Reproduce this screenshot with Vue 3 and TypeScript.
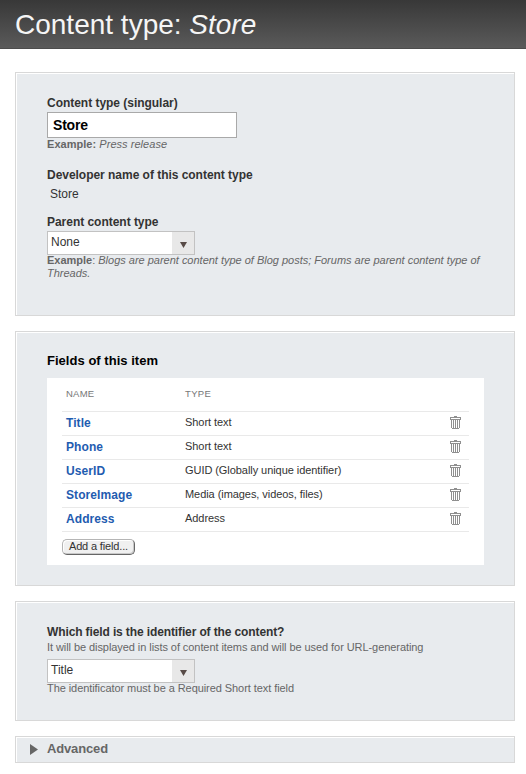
<script setup lang="ts">
import { ref } from 'vue'

interface Field {
  name: string
  type: string
}

const singularName = ref('Store')
const fields: Field[] = [
  { name: 'Title', type: 'Short text' },
  { name: 'Phone', type: 'Short text' },
  { name: 'UserID', type: 'GUID (Globally unique identifier)' },
  { name: 'StoreImage', type: 'Media (images, videos, files)' },
  { name: 'Address', type: 'Address' },
]
</script>

<template>
  <div class="page">
    <header class="header">
      <h1>Content type: <em>Store</em></h1>
    </header>
    <main class="panels">
      <section class="panel general">
        <label class="label" for="singular">Content type (singular)</label>
        <input id="singular" v-model="singularName" class="text-input" type="text" />
        <p class="hint first"><b>Example:</b> <em>Press release</em></p>
        <div class="label developer">Developer name of this content type</div>
        <div class="value">Store</div>
        <div class="label parent">Parent content type</div>
        <div class="select">
          <span class="select-text">None</span>
          <span class="select-button">
            <svg width="7" height="6" viewBox="0 0 7 6"><path d="M0 0H7L3.5 6Z" fill="#584b47" /></svg>
          </span>
        </div>
        <p class="hint wide"><b>Example</b>: <em>Blogs are parent content type of Blog posts; Forums are parent content type of Threads.</em></p>
      </section>

      <section class="panel fields">
        <h2>Fields of this item</h2>
        <div class="table-box">
          <div class="row head"><span class="name">NAME</span><span>TYPE</span></div>
          <div v-for="field in fields" :key="field.name" class="row">
            <a class="name">{{ field.name }}</a>
            <span class="type">{{ field.type }}</span>
            <svg class="trash" width="11" height="13" viewBox="0 0 11 13" shape-rendering="crispEdges">
              <g fill="#8f8f8f">
                <path d="M4 0h3v1H4z" />
                <path fill-rule="evenodd" d="M0 1h11v3H0zM1 2v1h9V2z" />
                <path d="M1 4h1v8H1zM3 4h1v8H3zM5 4h1v8H5zM7 4h1v8H7zM9 4h1v8H9zM2 12h7v1H2z" />
              </g>
            </svg>
          </div>
          <button class="add" type="button">Add a field...</button>
        </div>
      </section>

      <section class="panel identifier">
        <div class="label question">Which field is the identifier of the content?</div>
        <p class="hint intro">It will be displayed in lists of content items and will be used for URL-generating</p>
        <div class="select">
          <span class="select-text">Title</span>
          <span class="select-button">
            <svg width="7" height="6" viewBox="0 0 7 6"><path d="M0 0H7L3.5 6Z" fill="#584b47" /></svg>
          </span>
        </div>
        <p class="hint note">The identificator must be a Required Short text field</p>
      </section>

      <section class="panel advanced">
        <svg width="8" height="11" viewBox="0 0 8 11"><path d="M0 0L8 5.5L0 11Z" fill="#666" /></svg>
        <span>Advanced</span>
      </section>
    </main>
  </div>
</template>

<style>
body {
  background: #fff;
}
</style>

<style scoped>
.page {
  width: 526px;
  height: 774px;
  overflow: hidden;
  font-family: "Liberation Sans", Arial, sans-serif;
  font-size: 12px;
  line-height: 14px;
  color: #333;
}
h1, h2, p {
  margin: 0;
}
.header {
  box-sizing: border-box;
  height: 49px;
  padding: 9px 15px 0;
  background: linear-gradient(#383838, #5a5a5a);
  border-bottom: 1px solid #4c4c4c;
}
h1 {
  font-size: 28px;
  line-height: 32px;
  font-weight: normal;
  color: #f5f5f5;
  white-space: nowrap;
}
.panels {
  display: flex;
  flex-direction: column;
  gap: 15px;
  padding: 23px 11px 0 15px;
}
.panel {
  box-sizing: border-box;
  width: 500px;
  padding: 0 30px 0 31px;
  background: #e8ebee;
  border: 1px solid #d8d8d8;
  box-shadow: inset 1px 1px #fff;
}
.general {
  height: 244px;
  padding-top: 23px;
}
.fields {
  height: 255px;
  padding-top: 21px;
}
.identifier {
  height: 120px;
  padding-top: 23px;
}
.label {
  display: block;
  font-weight: bold;
  letter-spacing: -0.03px;
  white-space: nowrap;
}
.question {
  letter-spacing: -0.12px;
}
.text-input {
  display: block;
  box-sizing: border-box;
  width: 190px;
  height: 26px;
  margin-top: 2px;
  padding: 0 5px;
  border: 1px solid #a9a9a9;
  background: #fff;
  color: #000;
  font: bold 14px "Liberation Sans", Arial, sans-serif;
  letter-spacing: -0.2px;
  outline: none;
}
.hint {
  font-size: 11px;
  line-height: 13px;
  color: #666;
}
.first {
  letter-spacing: 0.04px;
}
.wide {
  width: 440px;
  margin-top: -1px;
  letter-spacing: -0.01px;
}
.intro {
  margin-top: 2px;
  letter-spacing: -0.07px;
}
.note {
  margin-top: -1px;
  letter-spacing: -0.07px;
}
.developer {
  margin-top: 17px;
}
.value {
  margin-top: 5px;
  padding-left: 3px;
}
.parent {
  margin-top: 14px;
}
.select {
  display: flex;
  box-sizing: border-box;
  width: 148px;
  height: 24px;
  margin-top: 2px;
  border: 1px solid #c2c2c2;
  background: #fff;
}
.select-text {
  flex: 1;
  padding: 3px 0 0 3px;
}
.select-button {
  width: 14px;
  padding: 10px 0 0 8px;
  background: #e8e8e8;
}
.select-button svg {
  display: block;
}
h2 {
  font-size: 13px;
  line-height: 15px;
  letter-spacing: 0.03px;
  color: #000;
}
.table-box {
  box-sizing: border-box;
  width: 437px;
  height: 187px;
  margin-top: 10px;
  padding: 0 15px;
  background: #fff;
}
.row {
  display: grid;
  grid-template-columns: 119px 1fr 19px;
  box-sizing: border-box;
  height: 24px;
  padding: 4px 0 0 4px;
  border-bottom: 1px solid #e9e9e9;
}
.row .name {
  font-weight: bold;
  letter-spacing: 0.08px;
  color: #1f5cb0;
}
.type {
  font-size: 11px;
  line-height: 13px;
  letter-spacing: -0.06px;
}
.head {
  height: 34px;
  padding-top: 10px;
  font-size: 9.5px;
  line-height: 12px;
  letter-spacing: 0.35px;
  color: #777;
}
.row.head .name {
  font-weight: normal;
  letter-spacing: 0.25px;
  color: #777;
}
.trash {
  display: block;
}
.add {
  display: block;
  box-sizing: border-box;
  width: 73px;
  height: 16px;
  margin: 7px 0 0;
  padding: 0 0 1px;
  border: 1px solid;
  border-color: #b5b5b5 #666 #666 #b5b5b5;
  border-radius: 5px;
  background: #f0f0f0;
  box-shadow: inset 1px 1px #fff, inset -1px -1px #c8c8c8;
  font: 11px/13px "Liberation Sans", Arial, sans-serif;
  letter-spacing: -0.15px;
  color: #333;
  white-space: nowrap;
}
.identifier .select {
  margin-top: 5px;
}
.advanced {
  display: flex;
  height: 27px;
  padding: 4px 0 0 14px;
  gap: 9px;
  font-size: 13px;
  line-height: 15px;
  font-weight: bold;
  letter-spacing: -0.15px;
  color: #666;
}
.advanced svg {
  margin-top: 3px;
}
</style>
